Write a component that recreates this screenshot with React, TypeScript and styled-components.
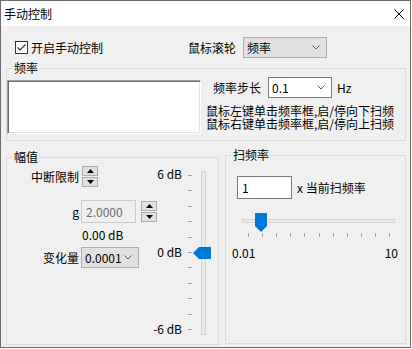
import styled, { createGlobalStyle } from "styled-components";

const GlobalStyle = createGlobalStyle`
  * { box-sizing: border-box; }
  html, body { margin: 0; padding: 0; background: #ffffff; }
  body {
    font-family: "Noto Sans CJK SC", "Noto Sans", sans-serif;
    font-size: 12px;
    color: #000000;
  }
`;

const Window = styled.div`
  width: 411px;
  height: 348px;
  border: 1px solid #6b6b6b;
  background: #f0f0f0;
  display: flex;
  flex-direction: column;
  overflow: hidden;
`;

const TitleBar = styled.div`
  height: 25px;
  flex: none;
  background: #ffffff;
  display: flex;
  align-items: center;
  justify-content: space-between;
  padding: 0 6px 0 3px;
  line-height: 14px;
`;

const Body = styled.div`
  flex: 1;
  padding: 11px 4px 0 5px;
  display: flex;
  flex-direction: column;
`;

const TopRow = styled.div`
  height: 21px;
  display: flex;
  align-items: center;
  padding-left: 9px;
  line-height: 14px;
`;

const CheckLabel = styled.label`
  width: 173px;
  display: flex;
  align-items: center;
  gap: 3px;
`;

const CheckBox = styled.span`
  width: 13px;
  height: 13px;
  border: 1px solid #333333;
  background: #ffffff;
  display: flex;
  align-items: center;
  justify-content: center;
`;

const FixedLabel = styled.span<{ $width: number; $indent?: number }>`
  width: ${(p) => p.$width}px;
  padding-left: ${(p) => p.$indent ?? 0}px;
  flex: none;
  white-space: nowrap;
`;

const Combo = styled.div<{ $width: number; $white?: boolean }>`
  width: ${(p) => p.$width}px;
  height: 21px;
  flex: none;
  border: 1px solid ${(p) => (p.$white ? "#7a7a7a" : "#adadad")};
  background: ${(p) => (p.$white ? "#ffffff" : "#e1e1e1")};
  display: flex;
  align-items: center;
  justify-content: space-between;
  padding: 0 6px 0 3px;
  line-height: 14px;
`;

const Group = styled.div<{ $width: number; $height: number; $top?: number }>`
  position: relative;
  flex: none;
  width: ${(p) => p.$width}px;
  height: ${(p) => p.$height}px;
  margin-top: ${(p) => p.$top ?? 0}px;
  border: 1px solid #dcdcdc;
`;

const Caption = styled.span`
  position: absolute;
  top: -8px;
  left: 5px;
  padding: 0 2px;
  background: #f0f0f0;
  line-height: 14px;
`;

const FreqContent = styled.div`
  display: flex;
  align-items: flex-start;
  padding-top: 8px;
`;

const FreqBox = styled.div`
  width: 194px;
  height: 54px;
  margin-top: 3px;
  background: #ffffff;
  border: 1px solid;
  border-color: #a0a0a0 #ffffff #ffffff #a0a0a0;
  box-shadow: inset 1px 1px 0 #696969, inset -1px -1px 0 #e3e3e3;
`;

const FreqSide = styled.div`
  margin-left: 5px;
  display: flex;
  flex-direction: column;
`;

const StepRow = styled.div`
  height: 21px;
  display: flex;
  align-items: center;
  line-height: 14px;
`;

const Unit = styled.span`
  margin-left: 5px;
`;

const Hints = styled.div`
  margin-top: 6px;
  line-height: 13px;
  white-space: nowrap;
`;

const GroupRow = styled.div`
  display: flex;
  align-items: flex-start;
  gap: 6px;
  margin-top: 14px;
`;

const AmpContent = styled.div`
  display: flex;
  align-items: flex-start;
`;

const Controls = styled.div`
  width: 149px;
  flex: none;
  display: flex;
  flex-direction: column;
  padding-top: 8px;
`;

const ControlRow = styled.div<{ $top: number; $gap: number; $height: number }>`
  display: flex;
  align-items: center;
  height: ${(p) => p.$height}px;
  margin-top: ${(p) => p.$top}px;
  gap: ${(p) => p.$gap}px;
  line-height: 14px;
`;

const FieldLabel = styled.span`
  width: 72px;
  flex: none;
  text-align: right;
  white-space: nowrap;
`;

const Readout = styled.div`
  margin-top: 6px;
  padding-left: 75px;
  line-height: 12px;
`;

const SpinStack = styled.div<{ $offset?: number }>`
  display: flex;
  flex-direction: column;
  gap: 1px;
  margin-left: ${(p) => p.$offset ?? 0}px;
`;

const SpinButton = styled.div`
  width: 16px;
  height: 10px;
  border: 1px solid #adadad;
  background: #e1e1e1;
  display: flex;
  align-items: center;
  justify-content: center;
`;

const Edit = styled.input<{ $width: number }>`
  width: ${(p) => p.$width}px;
  height: 23px;
  flex: none;
  margin: 0;
  padding: 0 4px;
  font: inherit;
  line-height: 14px;
  color: #000000;
  background: #ffffff;
  border: 1px solid #7a7a7a;
  outline: none;

  &:disabled {
    color: #6d6d6d;
    background: #f0f0f0;
    border-color: #cccccc;
  }
`;

const ScaleColumn = styled.div`
  width: 26px;
  height: 167px;
  margin-top: 10px;
  flex: none;
  display: flex;
  flex-direction: column;
  justify-content: space-between;
  align-items: flex-end;
  line-height: 12px;
  white-space: nowrap;
`;

const VSlider = styled.svg`
  flex: none;
  margin: 7px 0 0 4px;
`;

const ScanContent = styled.div`
  display: flex;
  flex-direction: column;
  padding: 0 7px 0 6px;
`;

const RateRow = styled.div`
  display: flex;
  align-items: center;
  margin: 20px 0 0 5px;
  line-height: 14px;
`;

const RateText = styled.span`
  margin-left: 5px;
  white-space: nowrap;
`;

const HSlider = styled.svg`
  margin: 12px 0 0 8px;
`;

const RangeLabels = styled.div`
  display: flex;
  justify-content: space-between;
  margin-top: 7px;
  line-height: 12px;
`;

const Chevron = () => (
  <svg width="8" height="5" viewBox="0 0 8 5">
    <path d="M0.5 0.5 L4 4 L7.5 0.5" fill="none" stroke="#5a5a5a" strokeWidth="1" />
  </svg>
);

const Arrow = ({ up }: { up?: boolean }) => (
  <svg width="7" height="4" viewBox="0 0 7 4">
    <polygon points={up ? "3.5,0 7,4 0,4" : "0,0 7,0 3.5,4"} fill="#000000" />
  </svg>
);

const Spin = ({ offset }: { offset?: number }) => (
  <SpinStack $offset={offset}>
    <SpinButton>
      <Arrow up />
    </SpinButton>
    <SpinButton>
      <Arrow />
    </SpinButton>
  </SpinStack>
);

const vTicks = Array.from({ length: 11 }, (_, i) => Math.round(10 + i * 15.4));
const hTicks = Array.from({ length: 11 }, (_, i) => Math.round(8 + i * 14.1));

export default function App() {
  return (
    <>
      <GlobalStyle />
      <Window>
        <TitleBar>
          <span>手动控制</span>
          <svg width="10" height="10" viewBox="0 0 10 10">
            <path d="M0.5 0.5 L9.5 9.5 M9.5 0.5 L0.5 9.5" stroke="#000000" strokeWidth="1" />
          </svg>
        </TitleBar>
        <Body>
          <TopRow>
            <CheckLabel>
              <CheckBox>
                <svg width="11" height="11" viewBox="0 0 11 11">
                  <path d="M1.5 5.5 L4 8 L9.5 2.5" fill="none" stroke="#333333" strokeWidth="1.2" />
                </svg>
              </CheckBox>
              开启手动控制
            </CheckLabel>
            <FixedLabel $width={55}>鼠标滚轮</FixedLabel>
            <Combo $width={84}>
              <span>频率</span>
              <Chevron />
            </Combo>
          </TopRow>

          <Group $width={400} $height={73} $top={10}>
            <Caption>频率</Caption>
            <FreqContent>
              <FreqBox />
              <FreqSide>
                <StepRow>
                  <FixedLabel $width={62} $indent={7}>频率步长</FixedLabel>
                  <Combo $width={64} $white>
                    <span>0.1</span>
                    <Chevron />
                  </Combo>
                  <Unit>Hz</Unit>
                </StepRow>
                <Hints>
                  <div>鼠标左键单击频率框,启/停向下扫频</div>
                  <div>鼠标右键单击频率框,启/停向上扫频</div>
                </Hints>
              </FreqSide>
            </FreqContent>
          </Group>

          <GroupRow>
            <Group $width={213} $height={188} $top={2}>
              <Caption>幅值</Caption>
              <AmpContent>
                <Controls>
                  <ControlRow $top={0} $gap={3} $height={21}>
                    <FieldLabel>中断限制</FieldLabel>
                    <Spin />
                  </ControlRow>
                  <ControlRow $top={13} $gap={2} $height={23}>
                    <FieldLabel>g</FieldLabel>
                    <Edit $width={55} value="2.0000" disabled readOnly />
                    <Spin offset={3} />
                  </ControlRow>
                  <Readout>0.00 dB</Readout>
                  <ControlRow $top={6} $gap={2} $height={21}>
                    <FieldLabel>变化量</FieldLabel>
                    <Combo $width={58}>
                      <span>0.0001</span>
                      <Chevron />
                    </Combo>
                  </ControlRow>
                </Controls>
                <ScaleColumn>
                  <span>6 dB</span>
                  <span>0 dB</span>
                  <span>-6 dB</span>
                </ScaleColumn>
                <VSlider width="26" height="172" viewBox="0 0 26 172">
                  {vTicks.map((y) => (
                    <rect key={y} x="2" y={y} width="4" height="1" fill="#a3a3a3" />
                  ))}
                  <rect x="15.5" y="6.5" width="4" height="163" fill="#e7eaea" stroke="#d6d6d6" />
                  <polygon points="7,88 13,82 25,82 25,94 13,94" fill="#0078d7" />
                </VSlider>
              </AmpContent>
            </Group>

            <Group $width={181} $height={189}>
              <Caption>扫频率</Caption>
              <ScanContent>
                <RateRow>
                  <Edit $width={55} value="1" readOnly />
                  <RateText>x 当前扫频率</RateText>
                </RateRow>
                <HSlider width="157" height="29" viewBox="0 0 157 29">
                  <rect x="2.5" y="8.5" width="152" height="3" fill="#e7eaea" stroke="#d6d6d6" />
                  <polygon points="15,2 27,2 27,15 21,21 15,15" fill="#0078d7" />
                  {hTicks.map((x) => (
                    <rect key={x} x={x} y="22" width="1" height="4" fill="#a3a3a3" />
                  ))}
                </HSlider>
                <RangeLabels>
                  <span>0.01</span>
                  <span>10</span>
                </RangeLabels>
              </ScanContent>
            </Group>
          </GroupRow>
        </Body>
      </Window>
    </>
  );
}
